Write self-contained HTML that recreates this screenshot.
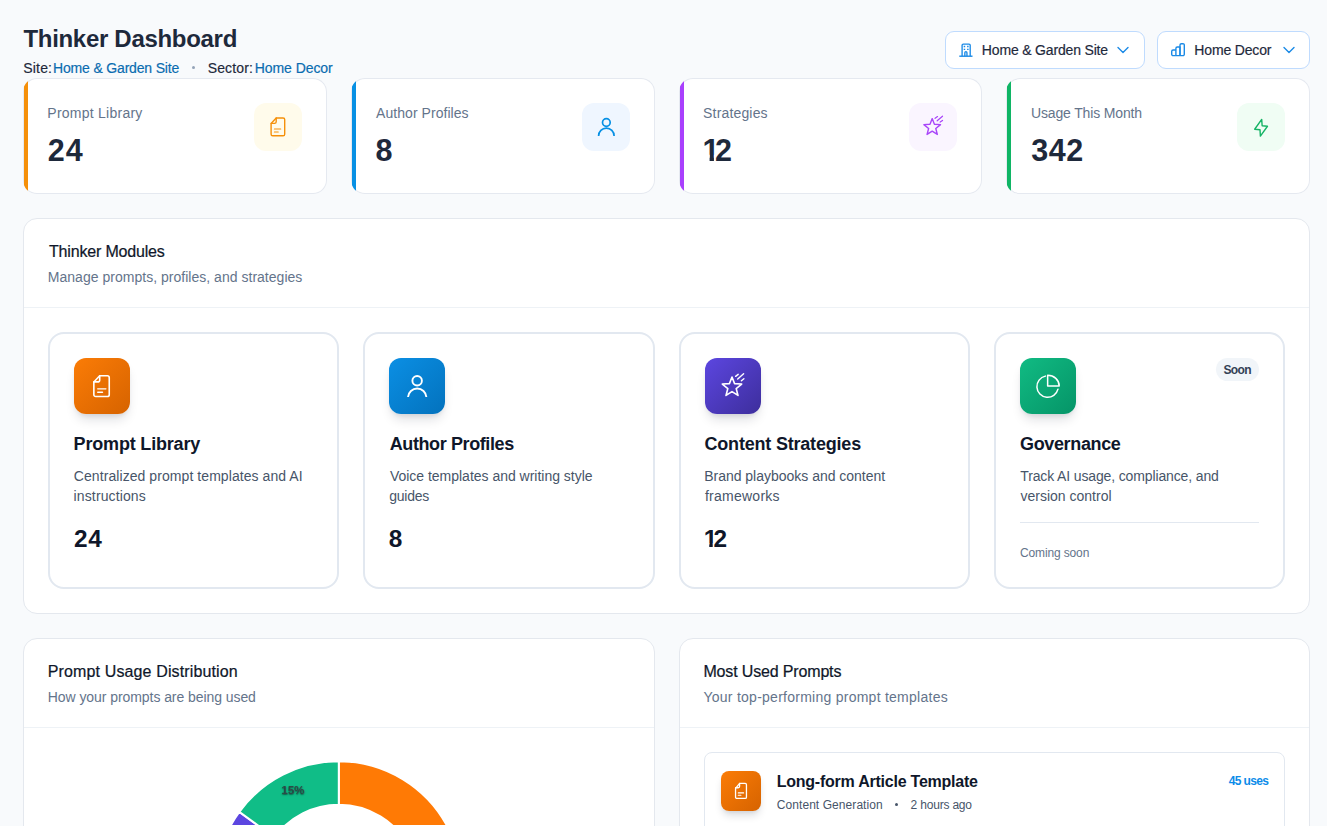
<!DOCTYPE html>
<html lang="en"><head>
<meta charset="utf-8">
<title>Thinker Dashboard</title>
<style>
*{box-sizing:border-box;margin:0;padding:0}
html,body{width:1327px;height:826px;overflow:hidden;background:#f8fafc}
body{font-family:"Liberation Sans",Arial,sans-serif;color:#0f172a;position:relative;-webkit-font-smoothing:antialiased}
.abs{position:absolute}
.t{position:absolute;white-space:nowrap;line-height:1}
a{color:inherit;text-decoration:none}

/* header */
.h1{left:23.5px;top:27.3px;font-size:24px;letter-spacing:.32px;font-weight:700;color:#1e293b;height:24px;line-height:24px}
.crumb{top:61px;font-size:14px;line-height:16px;color:#1e293b;-webkit-text-stroke:.18px #1e293b}
.crumb.lnk{color:#0a6cb0;-webkit-text-stroke:.18px #0a6cb0}
.dot{position:absolute;width:2.6px;height:2.6px;border-radius:50%;background:#94a3b8}
.btn{position:absolute;top:31px;height:38px;background:#fff;border:1px solid #bfdbfe;border-radius:9px}
.btn .t{top:11px;font-size:14px;line-height:16px;color:#1e293b;-webkit-text-stroke:.18px #1e293b}
.btn svg{position:absolute}

/* stat cards */
.stat{position:absolute;top:78px;height:116px;width:303.6px;background:#fff;box-shadow:inset 0 0 0 1px #e5e9f0;border-radius:14px;overflow:hidden}
.stat .bar{position:absolute;left:1px;top:0;bottom:0;width:4px}
.stat .lbl{left:24.5px;top:27px;font-size:14px;line-height:16px;color:#64748b}
.stat .num{left:24.3px;top:57px;font-size:30.5px;line-height:32px;font-weight:700;color:#1e293b}
.one{display:inline-block;line-height:1;clip-path:polygon(0 0,100% 0,100% .66em,.373em .66em,.373em 100%,.231em 100%,.231em .66em,0 .66em)}
.stat .ico{position:absolute;right:25.1px;top:25px;width:48px;height:48px;border-radius:12px}
.stat .ico svg{position:absolute;left:0;top:0}

/* generic card */
.card{position:absolute;background:#fff;border:1px solid #e4e8ee;border-radius:14px}
.card .ttl{left:24px;top:24px;font-size:16px;font-weight:400;line-height:18px;color:#0f172a;-webkit-text-stroke:.22px #0f172a}
.card .sub{left:24px;top:50px;font-size:14px;line-height:16px;color:#64748b}
.card .hr{position:absolute;left:0;right:0;top:88px;height:1px;background:#eef2f6}

/* module cards */
.mod{position:absolute;top:113px;width:291.1px;height:257px;border:2px solid #e2e8f0;border-radius:16px;background:#fff}
.mod .mi{position:absolute;left:24px;top:24px;width:56px;height:56px;border-radius:12px;box-shadow:0 8px 12px -3px rgba(15,23,42,.14),0 3px 5px -2px rgba(15,23,42,.10)}
.mod .mi svg{position:absolute;left:0;top:0}
.mod .mt{left:24px;top:101px;font-size:18px;line-height:20px;font-weight:700;color:#0f172a}
.mod .md{left:24px;font-size:14px;line-height:16px;color:#475569}
.mod .mn{left:24px;top:193px;font-size:24.4px;line-height:26px;font-weight:700;color:#0f172a}
</style>
</head>
<body>

<!-- ===== Header ===== -->
<h1 class="t h1" style="letter-spacing: -0.3px; left: 23.42px; top: 27.49px;">Thinker Dashboard</h1>
<span class="t crumb" style="left: 23.3px; letter-spacing: 0.164px; top: 59.96px;">Site:</span>
<a class="t crumb lnk" style="left: 53.06px; letter-spacing: -0.173px; top: 59.96px;">Home &amp; Garden Site</a>
<i class="dot" style="left:192px;top:66.400px;width:3px;height:3px"></i>
<span class="t crumb" style="left: 207.69px; letter-spacing: 0.146px; top: 59.96px;">Sector:</span>
<a class="t crumb lnk" style="left: 254.74px; letter-spacing: -0.064px; top: 59.96px;">Home Decor</a>

<div class="btn" style="left:945px;width:200px">
  <svg width="16" height="16" viewBox="0 0 16 16" style="left:13px;top:10px" fill="none" stroke="#1b8ae6" stroke-width="1.35">
    <path d="M3.1 14.2V3.3a1.200 1.200 0 0 1 1.200-1.200h5.700a1.200 1.200 0 0 1 1.200 1.200v10.900"></path><path d="M.3 14.200h13.200" stroke-width="1.400"></path>
    <path d="M5.850 14.200v-3.500a1.050 1.050 0 0 1 2.100 0v3.500"></path>
    <path d="M4.700 4.500h1.500M8.100 4.500h1.500M4.700 7.300h1.500M8.100 7.300h1.500" stroke-width="1.300"></path>
  </svg>
  <span class="t" style="left: 35.85px; letter-spacing: -0.172px; top: 9.86px;">Home &amp; Garden Site</span>
  <svg width="12" height="8" viewBox="0 0 12 8" style="left:171.300px;top:14.300px" fill="none" stroke="#1b8ae6" stroke-width="1.4" stroke-linecap="round" stroke-linejoin="round"><path d="M1 1.4l5 5 5-5"></path></svg>
</div>
<div class="btn" style="left:1157px;width:153px">
  <svg width="16" height="16" viewBox="0 0 16 16" style="left:13px;top:10px" fill="none" stroke="#1b8ae6" stroke-width="1.400" stroke-linejoin="round">
    <path d="M4.900 8H2.100a1.400 1.400 0 0 0-1.400 1.400v2.800a1.400 1.400 0 0 0 1.400 1.400h2.800"></path><path d="M4.900 13.600V6.400a1.400 1.400 0 0 1 1.400-1.400H9v8.600"></path><path d="M9 13.600V3.100a1.400 1.400 0 0 1 1.400-1.400h1.500a1.400 1.400 0 0 1 1.400 1.400v9.100a1.400 1.400 0 0 1-1.400 1.400H4.900"></path>
  </svg>
  <span class="t" style="left: 36.34px; letter-spacing: -0.157px; top: 9.86px;">Home Decor</span>
  <svg width="12" height="8" viewBox="0 0 12 8" style="left:125.200px;top:14.300px" fill="none" stroke="#1b8ae6" stroke-width="1.4" stroke-linecap="round" stroke-linejoin="round"><path d="M1 1.4l5 5 5-5"></path></svg>
</div>

<!-- ===== Stat cards ===== -->
<div class="stat" style="left:23px;width:304px"><i class="bar" style="background:#f5900a"></i>
  <span class="t lbl" style="letter-spacing: 0.242px; left: 24.36px; top: 26.96px;">Prompt Library</span><span class="t num" style="letter-spacing: 0.996px; left: 24.83px; top: 55.54px;">24</span>
  <div class="ico" style="background:#fffbeb"><svg width="48" height="48" viewBox="0 0 48 48" fill="none" stroke="#f5900a" stroke-width="1.400" stroke-linejoin="round" stroke-linecap="round"><path d="M22.200 14.950h6.900a1.600 1.600 0 0 1 1.600 1.600v14.650a1.600 1.600 0 0 1-1.600 1.600h-10.400a1.600 1.600 0 0 1-1.600-1.600v-10.800z"></path><path d="M22.200 14.950v3.700a1.700 1.700 0 0 1-1.700 1.700h-3.400"></path><path d="M20.400 26h6.300M20.400 29h3.800" stroke-width="1.150"></path></svg></div>
</div>
<div class="stat" style="left:351px;width:304px"><i class="bar" style="background:#0790e4"></i>
  <span class="t lbl" style="letter-spacing: 0.046px; left: 25.1px; top: 26.96px;">Author Profiles</span><span class="t num" style="left: 24.52px; top: 55.54px;">8</span>
  <div class="ico" style="background:#eff6ff"><svg width="48" height="48" viewBox="0 0 48 48" fill="none" stroke="#0790e4" stroke-width="1.700"><circle cx="24.350" cy="19.550" r="3.850"></circle><path d="M16.600 33.100v-.200a7.750 7.750 0 0 1 15.500 0v.200"></path></svg></div>
</div>
<div class="stat" style="left:679px;width:303px"><i class="bar" style="background:#a940fd"></i>
  <span class="t lbl" style="letter-spacing: 0.16px; left: 24.11px; top: 26.96px;">Strategies</span><span class="t num" style="left: 23.56px; top: 55.55px;"><span class="one" style="letter-spacing:-4.6px">1</span>2</span>
  <div class="ico" style="background:#faf5ff"><svg width="48" height="48" viewBox="0 0 48 48" fill="none" stroke="#a946f9" stroke-width="1.400" stroke-linejoin="round" stroke-linecap="round"><path d="M23.20 15.60L25.40 21.32L31.52 21.65L26.77 25.51L28.34 31.43L23.20 28.10L18.06 31.43L19.63 25.51L14.88 21.65L21.00 21.32Z"></path><path d="M26.100 15.300l2.400-1.700M28.200 17.750l5.300-4.500M31.200 19.100l2.300-1.650" stroke-width="1.250"></path></svg></div>
</div>
<div class="stat" style="left:1006px;width:304px"><i class="bar" style="background:#10b565"></i>
  <span class="t lbl" style="letter-spacing: -0.148px; left: 25px; top: 26.96px;">Usage This Month</span><span class="t num" style="letter-spacing: 0.515px; left: 25.29px; top: 55.54px;">342</span>
  <div class="ico" style="background:#f0fdf4"><svg width="48" height="48" viewBox="0 0 48 48" fill="none" stroke="#16b466" stroke-width="1.400" stroke-linejoin="round"><path d="M24.70 16.41L17.67 26.28L23.01 26.77L23.39 33.09L30.48 23.22L25.14 22.73z"></path></svg></div>
</div>

<!-- ===== Thinker Modules ===== -->
<section class="card" style="left:23px;top:218px;width:1287px;height:396px">
  <h2 class="t ttl" style="letter-spacing: -0.181px; left: 25.04px; top: 23.96px;">Thinker Modules</h2>
  <p class="t sub" style="letter-spacing: 0.022px; left: 23.81px; top: 50.05px;">Manage prompts, profiles, and strategies</p>
  <div class="hr"></div>

  <div class="mod" style="left:24px;width:291px">
    <div class="mi" style="background:linear-gradient(135deg,#fb7c06,#d66300)"><svg width="56" height="56" viewBox="0 0 56 56" fill="none" stroke="#fff" stroke-width="1.600" stroke-linejoin="round" stroke-linecap="round"><path d="M25.700 17.800h7.650a1.900 1.900 0 0 1 1.900 1.900v16.950a1.900 1.900 0 0 1-1.900 1.900h-11.600a1.900 1.900 0 0 1-1.900-1.900v-12.650z"></path><path d="M25.700 17.800v4.100a2 2 0 0 1-2 2h-3.850"></path><path d="M23.700 30.800h8.200M23.700 34.200h4.800" stroke-width="1.350"></path></svg></div>
    <h3 class="t mt" style="letter-spacing: -0.183px; left: 23.61px; top: 99.86px;">Prompt Library</h3>
    <p class="t md" style="top: 134.16px; letter-spacing: 0.07px; left: 23.83px;">Centralized prompt templates and AI</p>
    <p class="t md" style="top: 153.96px; letter-spacing: 0.126px; left: 23.6px;">instructions</p>
    <span class="t mn" style="letter-spacing: 0.579px; left: 24.04px; top: 192.15px;">24</span>
  </div>
  <div class="mod" style="left:339px;width:292px">
    <div class="mi" style="background:linear-gradient(135deg,#0b8fe4,#0372bd)"><svg width="56" height="56" viewBox="0 0 56 56" fill="none" stroke="#fff" stroke-width="1.900"><circle cx="28.150" cy="22.750" r="4.750"></circle><path d="M19.020 39.050A9.200 9.200 0 0 1 37.380 39.050"></path></svg></div>
    <h3 class="t mt" style="letter-spacing: -0.392px; left: 24.69px; top: 99.86px;">Author Profiles</h3>
    <p class="t md" style="top: 134.16px; letter-spacing: -0.013px; left: 24.89px;">Voice templates and writing style</p>
    <p class="t md" style="top: 153.96px; letter-spacing: -0.258px; left: 24.27px;">guides</p>
    <span class="t mn" style="left: 23.84px; top: 192.15px;">8</span>
  </div>
  <div class="mod" style="left:655px;width:291px">
    <div class="mi" style="background:linear-gradient(135deg,#5c46e0,#3d2e9c)"><svg width="56" height="56" viewBox="0 0 56 56" fill="none" stroke="#fff" stroke-width="1.600" stroke-linejoin="round" stroke-linecap="round"><path d="M27.00 19.00L29.59 25.64L36.70 26.05L31.18 30.56L33.00 37.45L27.00 33.60L21.00 37.45L22.82 30.56L17.30 26.05L24.41 25.64Z"></path><path d="M30.600 18.350l2.600-2M32.700 21l5.900-5.300M36.400 22.800l2.500-2.100" stroke-width="1.400"></path></svg></div>
    <h3 class="t mt" style="left: 23.51px; top: 99.86px; letter-spacing: -0.199px;">Content Strategies</h3>
    <p class="t md" style="top: 134.16px; letter-spacing: -0.013px; left: 23.17px;">Brand playbooks and content</p>
    <p class="t md" style="top: 153.96px; letter-spacing: 0.251px; left: 23.97px;">frameworks</p>
    <span class="t mn" style="left: 22.64px; top: 192.15px;"><span class="one" style="letter-spacing:-3.7px">1</span>2</span>
  </div>
  <div class="mod" style="left:970px;width:291px">
    <div class="mi" style="background:linear-gradient(135deg,#11bb83,#059467)"><svg width="56" height="56" viewBox="0 0 56 56" fill="none" stroke="#fff" stroke-width="1.500" stroke-linecap="round" stroke-linejoin="round"><path d="M25.380 18.130A10.700 10.700 0 1 0 37.980 31.190"></path><path d="M27.650 17.200V27.900H39.200A11.550 10.700 0 0 0 27.650 17.200z"></path></svg></div>
    <div class="abs" style="left:219.600px;top:24.200px;width:43.200px;height:23.300px;border-radius:12px;background:#f1f5f9"><span class="t" style="left: 7.95px; top: 4.66px; font-size: 12px; line-height: 14px; font-weight: 700; color: rgb(51, 65, 85); letter-spacing: -0.674px;">Soon</span></div>
    <h3 class="t mt" style="letter-spacing: -0.362px; left: 24.04px; top: 99.86px;">Governance</h3>
    <p class="t md" style="top: 134.16px; letter-spacing: -0.133px; left: 24.24px;">Track AI usage, compliance, and</p>
    <p class="t md" style="top: 153.96px; letter-spacing: 0.005px; left: 24.45px;">version control</p>
    <div class="abs" style="left:24px;right:24px;top:188px;height:1px;background:#e2e8f0"></div>
    <span class="t" style="left: 23.99px; top: 212.05px; font-size: 12px; line-height: 14px; color: rgb(100, 116, 139); letter-spacing: -0.137px;">Coming soon</span>
  </div>
</section>

<!-- ===== Bottom row ===== -->
<section class="card" style="left:23px;top:638px;width:632px;height:400px">
  <h2 class="t ttl" style="letter-spacing: 0.132px; left: 23.79px; top: 23.96px;">Prompt Usage Distribution</h2>
  <p class="t sub" style="letter-spacing: -0.067px; left: 23.81px; top: 50.05px;">How your prompts are being used</p>
  <div class="hr"></div>
  <svg class="abs" style="left:0;top:0" width="629" height="186" viewBox="0 0 629 186"><path d="M314.80 122.20A123 123 0 0 1 414.31 317.50L379.12 291.93A79.5 79.5 0 0 0 314.80 165.70Z" fill="#ff7a05" stroke="#fff" stroke-width="2"></path><path d="M414.31 317.50A123 123 0 0 1 242.50 344.71L268.07 309.52A79.5 79.5 0 0 0 379.12 291.93Z" fill="#0b8fe4" stroke="#fff" stroke-width="2"></path><path d="M242.50 344.71A123 123 0 0 1 215.29 172.90L250.48 198.47A79.5 79.5 0 0 0 268.07 309.52Z" fill="#5c46e0" stroke="#fff" stroke-width="2"></path><path d="M215.29 172.90A123 123 0 0 1 314.80 122.20L314.80 165.70A79.5 79.5 0 0 0 250.48 198.47Z" fill="#10bd87" stroke="#fff" stroke-width="2"></path><text x="269.1" y="154.8" text-anchor="middle" font-family="Liberation Sans, Arial, sans-serif" font-size="11.5" font-weight="700" fill="#2c4a47" style="text-shadow:0 1px 1.5px rgba(0,0,0,.5)">15%</text></svg>
</section>

<section class="card" style="left:679px;top:638px;width:631px;height:400px">
  <h2 class="t ttl" style="letter-spacing: -0.157px; left: 23.45px; top: 23.96px;">Most Used Prompts</h2>
  <p class="t sub" style="letter-spacing: 0.256px; left: 23.46px; top: 50.05px;">Your top-performing prompt templates</p>
  <div class="hr"></div>
  <div class="abs" style="left:24px;top:113px;width:581px;height:90px;border:1px solid #e2e8f0;border-radius:8px;background:#fff">
    <div class="abs" style="left:16px;top:18px;width:40px;height:40px;border-radius:8px;background:linear-gradient(135deg,#fb7c06,#d66300);box-shadow:0 6px 9px -2px rgba(15,23,42,.16),0 2px 4px -2px rgba(15,23,42,.10)">
      <svg class="abs" style="left:0;top:0" width="40" height="40" viewBox="0 0 40 40" fill="none" stroke="#fff" stroke-width="1.300" stroke-linejoin="round" stroke-linecap="round"><path d="M18.600 12.450h5.550a1.300 1.300 0 0 1 1.300 1.300v12.400a1.300 1.300 0 0 1-1.300 1.300h-8.300a1.300 1.300 0 0 1-1.300-1.300v-8.700z"></path><path d="M18.600 12.450v2.900a1.400 1.400 0 0 1-1.400 1.400h-2.650"></path><path d="M17.300 21.900h5.300M17.300 24.200h2.600" stroke-width="1.150"></path></svg>
    </div>
    <h3 class="t" style="left: 71.66px; top: 20.46px; font-size: 16px; line-height: 18px; font-weight: 700; color: rgb(15, 23, 42); letter-spacing: -0.233px;">Long-form Article Template</h3>
    <span class="t" style="left: 71.77px; top: 45.05px; font-size: 12px; line-height: 14px; color: rgb(71, 85, 105); letter-spacing: 0.069px;">Content Generation</span>
    <i class="dot" style="left:190px;top:50px;width:3px;height:3px;background:#475569"></i>
    <span class="t" style="left: 205.61px; top: 45.05px; font-size: 12px; line-height: 14px; color: rgb(71, 85, 105); letter-spacing: -0.198px;">2 hours ago</span>
    <span class="t" style="right: 15.8px; top: 20.74px; font-size: 12px; line-height: 14px; font-weight: 700; color: rgb(12, 140, 233); letter-spacing: -0.672px;">45 uses</span>
  </div>
</section>











</body></html>
